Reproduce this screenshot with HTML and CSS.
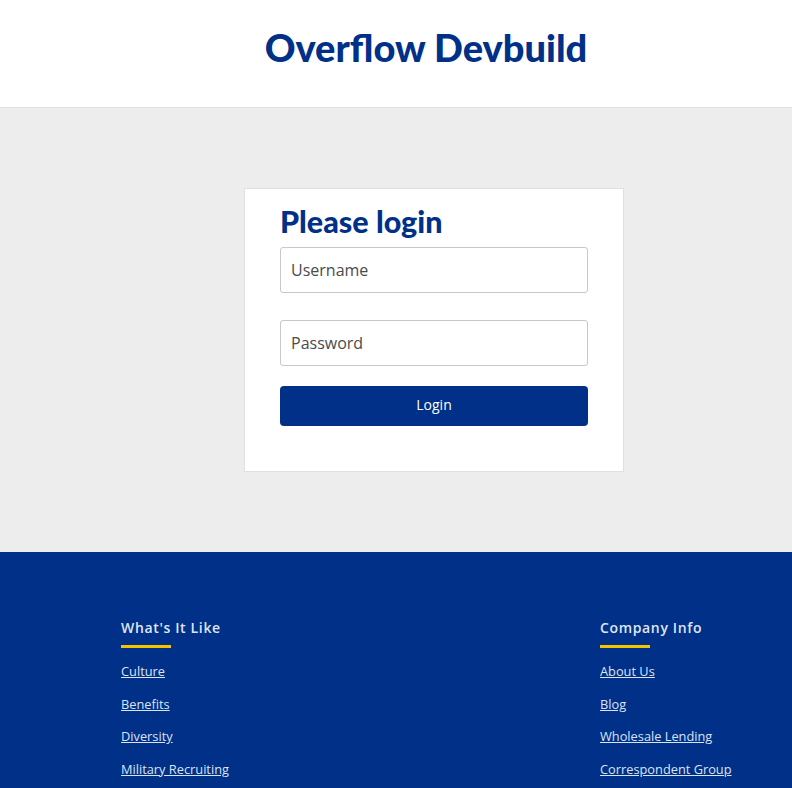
FILE: index.html
```html
<!DOCTYPE html>
<html>
<head>
<meta charset="utf-8">
<link rel="stylesheet" href="styles.css">
</head>
<body>
<header class="site-header">
  <h1 class="brand">Overflow Devbuild</h1>
</header>
<main class="main">
  <form class="card">
    <h2 class="card-title">Please login</h2>
    <input class="field" type="text" placeholder="Username">
    <input class="field field-pass" type="password" placeholder="Password">
    <button class="btn" type="button">Login</button>
  </form>
</main>
<footer class="footer">
  <div class="footer-grid">
    <div class="col">
      <h3 class="col-title">What's It Like</h3>
      <ul class="links">
        <li><a href="#">Culture</a></li>
        <li><a href="#">Benefits</a></li>
        <li><a href="#">Diversity</a></li>
        <li><a href="#">Military Recruiting</a></li>
      </ul>
    </div>
    <div class="col">
      <h3 class="col-title">Company Info</h3>
      <ul class="links">
        <li><a href="#">About Us</a></li>
        <li><a href="#">Blog</a></li>
        <li><a href="#">Wholesale Lending</a></li>
        <li><a href="#">Correspondent Group</a></li>
      </ul>
    </div>
  </div>
</footer>
</body>
</html>
```
FILE: styles.css
```css
* { box-sizing: border-box; }
html, body { margin: 0; padding: 0; }
body {
  font-family: "Open Sans", "Liberation Sans", sans-serif;
  background: #ededed;
  color: #333;
}
.site-header {
  background: #fff;
  height: 108px;
  border-bottom: 1px solid #e2e2e2;
  padding-top: 24px;
  padding-left: 60px;
  text-align: center;
}
.brand {
  margin: 0;
  font-family: "Lato", sans-serif;
  font-weight: 900;
  font-size: 38px;
  line-height: 46px;
  color: #003087;
}
.main {
  height: 444px;
  padding-top: 80px;
  padding-left: 244px;
}
.card {
  width: 380px;
  height: 284px;
  background: #fff;
  border: 1px solid #e0e0e0;
  padding: 14px 35px 0 35px;
  display: flex;
  flex-direction: column;
}
.card-title {
  margin: 0 0 8px 0;
  font-family: "Lato", sans-serif;
  font-weight: 900;
  font-size: 30.5px;
  line-height: 36px;
  color: #003087;
}
.field {
  height: 46px;
  width: 100%;
  border: 1px solid #c8c8c8;
  border-radius: 3px;
  padding: 0 10px;
  font-family: "Open Sans", sans-serif;
  font-size: 16px;
  color: #444;
  background: #fff;
}
.field::placeholder { color: #4a4a4a; }
.field-pass { margin-top: 27px; }
.btn {
  margin-top: 20px;
  height: 40px;
  width: 100%;
  border: none;
  border-radius: 4px;
  background: #003087;
  color: #fff;
  font-family: "Open Sans", sans-serif;
  font-size: 14px;
  line-height: 18px;
  padding: 0 0 2px 0;
}
.footer {
  background: #003087;
  height: 236px;
  padding-top: 66px;
  padding-left: 121px;
}
.footer-grid {
  display: grid;
  grid-template-columns: 479px auto;
}
.col-title {
  margin: 0;
  font-size: 14px;
  font-weight: 600;
  letter-spacing: 0.65px;
  line-height: 20px;
  color: #dfe6f3;
  padding-bottom: 8px;
}
.col-title::after {
  content: "";
  display: block;
  width: 50px;
  height: 3px;
  background: #f5c400;
  margin-top: 7px;
}
.links {
  list-style: none;
  margin: 5px 0 0 0;
  padding: 0;
}
.links li {
  height: 32.7px;
  line-height: 18px;
}
.links a {
  font-size: 12.8px;
  color: #dbe4f5;
  text-decoration: underline;
}
```
